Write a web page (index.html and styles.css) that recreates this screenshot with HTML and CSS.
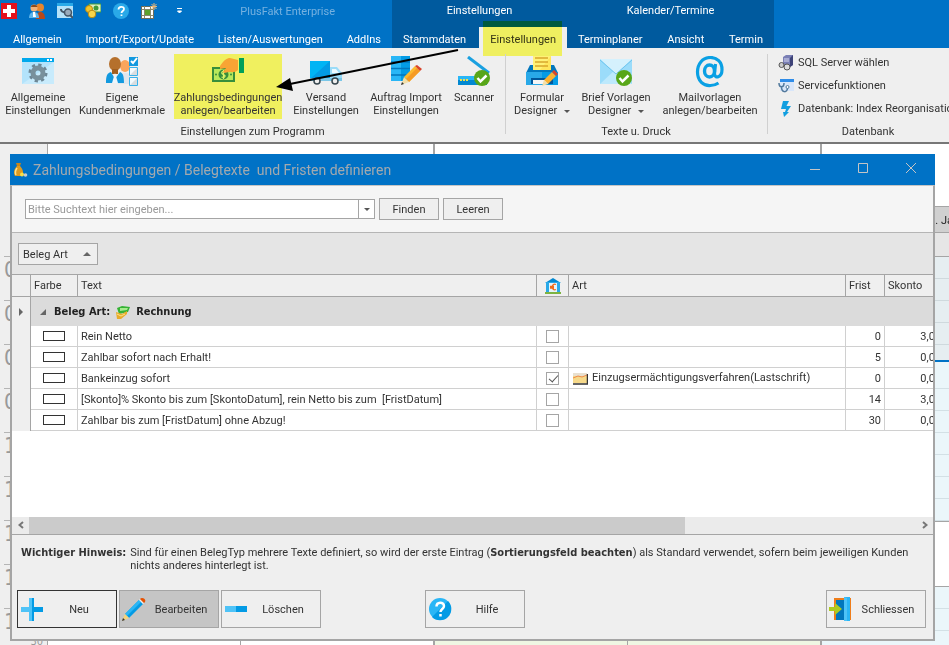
FILE: index.html
```html
<!DOCTYPE html>
<html lang="de">
<head>
  <meta charset="UTF-8">
  <meta name="viewport" content="width=device-width, initial-scale=1.0">
  <title>PlusFakt Enterprise</title>
  <link rel="stylesheet" href="styles.css">
</head>
<body>
  <header class="titlebar">
    <div class="tab-group main-group">
      <div class="quick-bar">
        <svg width="16" height="16" viewBox="0 0 16 16"><rect width="16" height="16" fill="#e3101c"/><path d="M6 2h4v4h4v4h-4v4H6v-4H2V6h4z" fill="#fff"/></svg>
        <svg width="16" height="16" viewBox="0 0 16 16"><circle cx="11" cy="4.500" r="4" fill="#e8862d"/><path d="M7 16c0-5 2-7 4.500-7s4.500 2 4.500 7z" fill="#b8481a"/><circle cx="5" cy="5" r="3.500" fill="#f0b27a"/><path d="M2 4c0-3 6-3 6.500 0z" fill="#8a4a1c"/><path d="M0 15c0-4 2-6 5-6s5 2 5 6z" fill="#5cb4ea"/><path d="M4 9h2l1 5H4z" fill="#fff"/></svg>
        <svg width="16" height="16" viewBox="0 0 16 16"><rect y="1" width="16" height="14" fill="#b5e2f9"/><rect width="16" height="3" fill="#29a9e8"/><circle cx="11" cy="9.500" r="3.500" fill="#9ab" stroke="#456" stroke-width="1.500"/><path d="M4 6a3 3 0 0 0 4 3M13 12l3 3" fill="none" stroke="#456" stroke-width="2"/></svg>
        <svg width="16" height="16" viewBox="0 0 16 16"><rect x="4" y="1" width="12" height="8" fill="#dff0c0" stroke="#3f9a3a"/><circle cx="11" cy="5" r="2.500" fill="#3f9a3a"/><circle cx="4" cy="6" r="3.500" fill="#f4c52c" stroke="#b98a10"/><circle cx="7" cy="11" r="3.800" fill="#f9d54a" stroke="#b98a10"/></svg>
        <svg width="16" height="16" viewBox="0 0 32 32"><circle cx="16" cy="16" r="16" fill="#29a9e8"/><path d="M11 13c0-7 11-7 11-1 0 4-5 4-5 8M17 23v3" fill="none" stroke="#fff" stroke-width="3.500"/></svg>
        <svg width="16" height="16" viewBox="0 0 16 16"><rect x=".5" y="3.500" width="12" height="12" fill="#fff" stroke="#6d6d5a"/><path d="M.5 6.500h12M3.500 3v12M9.500 3v12M.5 12.500h12" stroke="#8a8a6a"/><rect x="4" y="7" width="5" height="5" fill="#5da22c"/><path d="M13 0v7M9.500 3.500h6.500M10.500 1l5 5M15.500 1l-5 5" stroke="#e8b878"/></svg>
        <button class="quick-menu" aria-label="Symbolleiste anpassen"><svg width="7" height="6" viewBox="0 0 7 6"><path d="M1 .5h5M1.500 3h4L3.500 5z" fill="#fff" stroke="#fff"/></svg></button>
        <span class="app-title">PlusFakt Enterprise</span>
      </div>
      <nav class="tabs">
        <a href="#">Allgemein</a>
        <a href="#">Import/Export/Update</a>
        <a href="#">Listen/Auswertungen</a>
        <a href="#">AddIns</a>
      </nav>
    </div>
    <div class="tab-group context settings-group">
      <div class="context-title">Einstellungen</div>
      <nav class="tabs">
        <a href="#">Stammdaten</a>
        <a href="#" class="active">Einstellungen</a>
      </nav>
    </div>
    <div class="tab-group context calendar-group">
      <div class="context-title">Kalender/Termine</div>
      <nav class="tabs">
        <a href="#">Terminplaner</a>
        <a href="#">Ansicht</a>
        <a href="#">Termin</a>
      </nav>
    </div>
  </header>

  <div class="ribbon">
    <section class="ribbon-group program-group">
      <div class="ribbon-items">
        <button>
          <svg width="32" height="32" viewBox="0 0 32 32"><rect y="2" width="32" height="26" fill="#b3e3fb"/><path d="M0 28L32 6v22z" fill="#c8ebfc"/><rect y="2" width="32" height="4" fill="#00a8ec"/><path d="M25 4h2M28 4h2" stroke="#fff" stroke-width="2"/><circle cx="16" cy="17" r="8" fill="none" stroke="#6d8796" stroke-width="3" stroke-dasharray="3.200 3.080"/><circle cx="16" cy="17" r="5" fill="none" stroke="#78909c" stroke-width="5"/></svg>
          <span>Allgemeine<br>Einstellungen</span>
        </button>
        <button>
          <svg width="32" height="32" viewBox="0 0 32 32"><ellipse cx="19" cy="10" rx="5" ry="6" fill="#f9a55c"/><path d="M12 28c1-8 4-11 8-11s4 3 4 11z" fill="#dfe6ec"/><ellipse cx="9" cy="8" rx="6" ry="7" fill="#b5702c"/><path d="M6 13h6v5H6z" fill="#a05f20"/><path d="M0 27c0-7 1-10 5-11l4 7 5-7c3 1 4 4 4 11z" fill="#1299df"/><path d="M9 17l-3 10h6z" fill="#eef6fb"/><rect x="23" y="1" width="9" height="9" fill="#1299df"/><path d="M25 5l2 2 4-5" fill="none" stroke="#fff" stroke-width="2"/><path d="M23.500 11.500h8v8h-8zM23.500 21.500h8v8h-8z" fill="#f4fafd"/><path d="M24 19l7-7v7zM24 29l7-7v7z" fill="#d8dde0"/><path d="M23.500 11.500h8v8h-8zM23.500 21.500h8v8h-8z" fill="none" stroke="#39b2ea"/></svg>
          <span>Eigene<br>Kundenmerkmale</span>
        </button>
        <button class="marked">
          <svg width="32" height="32" viewBox="0 0 32 32"><rect y="11" width="23" height="15" fill="#388e3c"/><rect x="2" y="13" width="19" height="11" fill="#b9e85a"/><circle cx="11.500" cy="18.500" r="5" fill="#388e3c"/><path d="M13 16c-4-2-4 2-1.500 2.500s2 4-2 2.500M11.500 14v9" fill="none" stroke="#dff56a" stroke-width="1.200"/><circle cx="4" cy="18.500" r="1" fill="#388e3c"/><circle cx="19" cy="18.500" r="1" fill="#388e3c"/><path d="M8 10c4-6 7-8 10-8l8 2v10c-3 3-6 2-9 2l-5 1-1-1 3-4-6 1z" fill="#f8a434"/><rect x="27" y="2" width="5" height="15" fill="#00a05a"/></svg>
          <span>Zahlungsbedingungen<br>anlegen/bearbeiten</span>
        </button>
        <button>
          <svg width="32" height="32" viewBox="0 0 32 32"><rect y="5" width="20" height="18" fill="#039be5"/><path d="M0 23V5h20z" fill="#00b4f4"/><path d="M20 11h7l5 6v8H20z" fill="#9bdcf8"/><path d="M22 13h4l3 4h-7z" fill="#eefaff"/><path d="M0 22h32v3H0z" fill="#7ac7e8"/><circle cx="7" cy="25" r="3" fill="#eee" stroke="#37474f" stroke-width="1.500"/><circle cx="25" cy="25" r="3" fill="#eee" stroke="#37474f" stroke-width="1.500"/></svg>
          <span>Versand<br>Einstellungen</span>
        </button>
        <button>
          <svg width="32" height="32" viewBox="0 0 32 32"><path d="M1 0h19v25H1z" fill="#039be5"/><path d="M1 0h10v25H1z" fill="#29b6f6"/><path d="M1 6h19M1 12.500h19M1 19h19" stroke="#0277bd" stroke-width="1.500"/><path d="M14 21L25 10l5 5-11 11z" fill="#fdb92e"/><path d="M16 23L27 12l3 3-11 11z" fill="#f59a23"/><path d="M14 21l5 5-8 3z" fill="#f3dfa8"/><path d="M12 26l2 2-3 1z" fill="#333"/><path d="M25 10l2-1 5 4-2 2z" fill="#d9432a"/></svg>
          <span>Auftrag Import<br>Einstellungen</span>
        </button>
        <button>
          <svg width="32" height="32" viewBox="0 0 32 32"><path d="M10 0l21 15v7z" fill="#eef6fa"/><path d="M10 1l21 16" stroke="#1aa0e0" stroke-width="3"/><path d="M0 20h29v9H0z" fill="#0288d1"/><path d="M0 20h29l-9 4H0z" fill="#29b6f6"/><path d="M2 24h2M5 24h2M8 24h2" stroke="#f3e34a" stroke-width="2"/><circle cx="24" cy="22" r="8" fill="#58a618"/><path d="M19.500 22l3 3.500 6-6" fill="none" stroke="#fff" stroke-width="2.500"/></svg>
          <span>Scanner</span>
        </button>
      </div>
      <div class="ribbon-label">Einstellungen zum Programm</div>
    </section>

    <section class="ribbon-group print-group">
      <div class="ribbon-items">
        <button>
          <svg width="32" height="32" viewBox="0 0 32 32"><path d="M4 9h24l4 8H0z" fill="#0277bd"/><path d="M7 0h18v14H7z" fill="#fff176"/><path d="M25 0v14H14z" fill="#ffe55c"/><path d="M9 2h13M9 6h13M9 10h13" stroke="#d9a62c" stroke-width="1.500"/><path d="M0 16h32v13H0z" fill="#039be5"/><path d="M0 16h16v13H0z" fill="#29a9e8"/><path d="M5 22h22v6H5z" fill="#01579b"/><path d="M7 24h15v4H7z" fill="#f5f5f5"/><path d="M18 24l8-8 4 4-8 8z" fill="#f9b233"/><path d="M18 24l4 4-6 2z" fill="#f3dfa8"/><path d="M26 16l2-2 4 4-2 2z" fill="#d9432a"/></svg>
          <span>Formular<br>Designer <i class="caret"></i></span>
        </button>
        <button>
          <svg width="32" height="32" viewBox="0 0 32 32"><path d="M0 3h32v25H0z" fill="#9bdcfa"/><path d="M0 28L16 13l16 15z" fill="#bde9fc"/><path d="M0 3h32L16 18z" fill="#d5f1fd"/><path d="M0 4l16 14L32 4" fill="none" stroke="#6fc5ee"/><circle cx="24" cy="22" r="8" fill="#58a618"/><path d="M19.500 22l3 3.500 6-6" fill="none" stroke="#fff" stroke-width="2.500"/></svg>
          <span>Brief Vorlagen<br>Designer <i class="caret"></i></span>
        </button>
        <button>
          <svg width="32" height="32" viewBox="0 0 32 32"><g fill="none" stroke="#0aa0e4"><ellipse cx="15.500" cy="15" rx="5" ry="6" stroke-width="3.400"/><path d="M21.500 8l-1 9.500c0 5.500 7.500 4.500 7.500-4C28 6 23 1.500 16.500 1.500 8.500 1.500 3.500 8 3.500 16c0 9 6 14 13 13.500 3 0 5-.5 8-2.500" stroke-width="3.200"/></g></svg>
          <span>Mailvorlagen<br>anlegen/bearbeiten</span>
        </button>
      </div>
      <div class="ribbon-label">Texte u. Druck</div>
    </section>

    <section class="ribbon-group database-group">
      <div class="ribbon-list">
        <button>
          <svg width="16" height="16" viewBox="0 0 16 16"><path d="M5 2l3-2h7v10l-3 2H5z" fill="#7a7fb5"/><path d="M12 3l3-3v10l-3 2z" fill="#3d4277"/><path d="M6 4h5M6 6h5" stroke="#d5d8f0"/><circle cx="3.500" cy="10" r="2.500" fill="#ccc" stroke="#555"/><circle cx="9" cy="12" r="3" fill="#ddd" stroke="#555"/></svg>
          SQL Server wählen
        </button>
        <button>
          <svg width="16" height="16" viewBox="0 0 16 16"><rect x="2" y="2" width="14" height="11" fill="#d8e6fa"/><rect x="2" y="1" width="14" height="3" fill="#2f8ce8"/><path d="M1 5c0 5 5 5 5 0M3.500 9c0 6 6 6 6 1" fill="none" stroke="#52799c" stroke-width="1.500"/><circle cx="9.500" cy="9" r="1.500" fill="#fff" stroke="#52799c"/></svg>
          Servicefunktionen
        </button>
        <button>
          <svg width="16" height="16" viewBox="0 0 16 16"><path d="M5 0h6L8.500 5H13L9 11h2l-5 5-1-5h2l1-3H3z" fill="#129fe0"/></svg>
          Datenbank: Index Reorganisation
        </button>
      </div>
      <div class="ribbon-label">Datenbank</div>
    </section>
  </div>

  <main class="workspace">
    <div class="ruler">
      <div class="hour">06</div>
      <div class="hour">07</div>
      <div class="hour">08</div>
      <div class="hour">09</div>
      <div class="hour">10</div>
      <div class="hour">11</div>
      <div class="hour">12</div>
      <div class="hour">13</div>
      <div class="hour">14<small>30</small></div>
    </div>
    <div class="day"><div class="person"></div><div class="person"></div></div>
    <div class="day green"><div class="person"></div><div class="person"></div></div>
    <div class="day last">
      <div class="day-name">05. Januar</div>
      <div class="all-day"></div>
      <div class="slots early"></div>
      <div class="slots work"></div>
      <div class="slots pause"></div>
      <div class="slots"></div>
    </div>

    <section class="dialog">
      <div class="dialog-title">
        <svg width="16" height="16" viewBox="0 0 16 16"><path d="M3 1h5L7 4H4z" fill="#c8861a"/><path d="M4 4h3c3 3 4 7 2 10H2C0 11 1 7 4 4z" fill="#dd9a20"/><path d="M4 6c-2 3-2 5-1 7" stroke="#ffe08a" fill="none" stroke-width="1.500"/><circle cx="9" cy="12.500" r="2" fill="#f7e04a"/><circle cx="12.500" cy="13" r="1.800" fill="#ccc"/></svg>
        <h1>Zahlungsbedingungen / Belegtexte&nbsp; und Fristen definieren</h1>
        <button aria-label="Minimieren"><svg width="10" height="10" viewBox="0 0 10 10"><path d="M0 6.500h10"/></svg></button>
        <button aria-label="Maximieren"><svg width="10" height="10" viewBox="0 0 10 10"><path d="M.5.5h9v9h-9z"/></svg></button>
        <button aria-label="Schließen"><svg width="10" height="10" viewBox="0 0 10 10"><path d="M0 0l10 10M10 0L0 10"/></svg></button>
      </div>

      <div class="dialog-body">
        <form class="search">
          <div class="search-box">
            <input type="text" placeholder="Bitte Suchtext hier eingeben..." aria-label="Suchtext">
            <button type="button" aria-label="Verlauf"><i class="caret"></i></button>
          </div>
          <button type="button" class="btn">Finden</button>
          <button type="button" class="btn">Leeren</button>
        </form>

        <div class="group-panel">
          <button class="group-by">Beleg Art <i class="sort-up"></i></button>
        </div>

        <div class="grid">
          <table>
            <colgroup>
              <col class="c-mark"><col class="c-color"><col class="c-text"><col class="c-check"><col><col class="c-term"><col class="c-discount">
            </colgroup>
            <thead>
              <tr>
                <th></th>
                <th>Farbe</th>
                <th>Text</th>
                <th class="center"><svg width="16" height="16" viewBox="0 0 16 16"><path d="M0 5l8-5 8 5z" fill="#0288d1"/><path d="M1 4h14v10H1z" fill="#29a9e8"/><path d="M4 5h8v9H4z" fill="#e4f3fb"/><path d="M0 15h16" stroke="#7cb342" stroke-width="2"/><path d="M11 6.500c-5-2-5 7 0 5M5 8.500h4M5 10h4" fill="none" stroke="#ef6c1a" stroke-width="1.300"/></svg></th>
                <th>Art</th>
                <th>Frist</th>
                <th>Skonto</th>
              </tr>
            </thead>
            <tbody>
              <tr class="group-row">
                <td><i class="row-arrow"></i></td>
                <td colspan="6">
                  <div class="group-head">
                    <i class="expander"></i>
                    <span>Beleg Art:</span>
                    <svg width="14" height="14" viewBox="0 0 14 14"><path d="M1 3l5-2 8 1-2 5-9 2z" fill="#35b335"/><path d="M4 3l8 0-1 2-7 1z" fill="#a6eb8e"/><path d="M0 7l6 2 5-3v3l-6 5H1z" fill="#e9ac2a"/><path d="M1 9l4 2 4-2" fill="none" stroke="#fbe38a"/></svg>
                    <span>Rechnung</span>
                  </div>
                </td>
              </tr>
              <tr>
                <td></td>
                <td><span class="swatch"></span></td>
                <td>Rein Netto</td>
                <td class="center"><input type="checkbox" aria-label="Bankeinzug"></td>
                <td></td>
                <td class="num">0</td>
                <td class="num">3,00</td>
              </tr>
              <tr>
                <td></td>
                <td><span class="swatch"></span></td>
                <td>Zahlbar sofort nach Erhalt!</td>
                <td class="center"><input type="checkbox" aria-label="Bankeinzug"></td>
                <td></td>
                <td class="num">5</td>
                <td class="num">0,00</td>
              </tr>
              <tr>
                <td></td>
                <td><span class="swatch"></span></td>
                <td>Bankeinzug sofort</td>
                <td class="center"><input type="checkbox" aria-label="Bankeinzug" checked></td>
                <td class="kind"><svg width="16" height="13" viewBox="0 0 16 13"><path d="M1 1h7l1 1h6v9H1z" fill="#f6d98a"/><path d="M1 1h14v3H1z" fill="#e8e0d0"/><path d="M1 6l5-2 4 1 5-2" fill="none" stroke="#ee8a4a"/><path d="M1 12h14.500V2" fill="none" stroke="#333" stroke-width="1.500"/></svg>Einzugsermächtigungsverfahren(Lastschrift)</td>
                <td class="num">0</td>
                <td class="num">0,00</td>
              </tr>
              <tr>
                <td></td>
                <td><span class="swatch"></span></td>
                <td>[Skonto]% Skonto bis zum [SkontoDatum], rein Netto bis zum&nbsp; [FristDatum]</td>
                <td class="center"><input type="checkbox" aria-label="Bankeinzug"></td>
                <td></td>
                <td class="num">14</td>
                <td class="num">3,00</td>
              </tr>
              <tr>
                <td></td>
                <td><span class="swatch"></span></td>
                <td>Zahlbar bis zum [FristDatum] ohne Abzug!</td>
                <td class="center"><input type="checkbox" aria-label="Bankeinzug"></td>
                <td></td>
                <td class="num">30</td>
                <td class="num">0,00</td>
              </tr>
            </tbody>
          </table>
        </div>

        <div class="scrollbar">
          <button aria-label="Nach links"><svg width="6" height="8" viewBox="0 0 6 8"><path d="M5 1L1.500 4 5 7"/></svg></button>
          <div class="track"><div class="thumb"></div></div>
          <button aria-label="Nach rechts"><svg width="6" height="8" viewBox="0 0 6 8"><path d="M1 1l3.500 3L1 7"/></svg></button>
        </div>

        <div class="hint">
          <strong>Wichtiger Hinweis:</strong>
          <p>Sind für einen BelegTyp mehrere Texte definiert, so wird der erste Eintrag (<strong>Sortierungsfeld beachten</strong>) als Standard verwendet, sofern beim jeweiligen Kunden nichts anderes hinterlegt ist.</p>
        </div>

        <div class="actions">
          <button class="focused"><svg width="24" height="24" viewBox="0 0 24 24"><path d="M9 1h5v9h9v5h-9v9H9v-9H1v-5h8z" fill="#4fc3f7"/><path d="M12 1h2v9h9v5h-9v9h-2z" fill="#039be5"/></svg><span>Neu</span></button>
          <button class="pressed"><svg width="24" height="24" viewBox="0 0 24 24"><path d="M3 17L17 3l4 4L7 21z" fill="#039be5"/><path d="M3 17L17 3l2 2L5 19z" fill="#29b6f6"/><path d="M3 17l4 4-7 3z" fill="#f5d47a"/><path d="M1 21l2 2-3 1z" fill="#333"/><path d="M17 3l1-1 4 4-1 1z" fill="#eee"/><path d="M18 2c2-3 8 1 4 4z" fill="#e65100"/></svg><span>Bearbeiten</span></button>
          <button><svg width="24" height="24" viewBox="0 0 24 24"><path d="M1 9h22v6H1z" fill="#4fc3f7"/><path d="M12 9h11v6H12z" fill="#039be5"/></svg><span>Löschen</span></button>
          <button class="help"><svg width="24" height="24" viewBox="0 0 24 24"><circle cx="12" cy="12" r="11" fill="#29b6f6"/><path d="M20 4A11 11 0 0 1 4 20z" fill="#039be5"/><path d="M8.500 9.500c0-5 7.500-5 7.500-.5 0 3-3.500 3-3.500 6M12.500 17v2.500" fill="none" stroke="#fff" stroke-width="2.500"/></svg><span>Hilfe</span></button>
          <button class="close"><svg width="24" height="24" viewBox="0 0 24 24"><path d="M5 1h17v22H5z" fill="#ef7d1a"/><path d="M7 3h13v20H7z" fill="#0277bd"/><path d="M15 0h6v24h-6z" fill="#29b6f6"/><path d="M15 0l3 1v23l-3 0z" fill="#4fc3f7"/><path d="M0 10h6V6l7 6-7 6v-4H0z" fill="#afcb1f"/></svg><span>Schliessen</span></button>
        </div>
      </div>
    </section>
  </main>

  <svg class="pointer" width="190" height="50" viewBox="0 0 190 50"><path d="M188 2L15 37" stroke="#000" stroke-width="2"/><path d="M6 39l14-9 3 13z" fill="#000"/></svg>
</body>
</html>
```
FILE: styles.css
```css
* {
  box-sizing: border-box;
}

body {
  display: flex;
  flex-direction: column;
  position: relative;
  min-height: 100vh;
  margin: 0;
  overflow: hidden;
  background-color: #fff;
  color: #333;
  font-family: Roboto, "Liberation Sans", sans-serif;
  font-size: 11px;
  line-height: 13px;
}

button,
input {
  margin: 0;
  padding: 0;
  border: none;
  border-radius: 0;
  background: none;
  color: inherit;
  font: inherit;
}

svg {
  flex: none;
}

strong {
  font-family: "DejaVu Sans Condensed", sans-serif;
}

/* title bar and tabs */
.titlebar {
  display: flex;
  height: 48px;
  background-color: #0072c6;
  color: #fff;
}

.tab-group {
  display: flex;
  flex-direction: column;
  justify-content: space-between;
}

.main-group {
  width: 392px;
}

.settings-group {
  width: 175px;
}

.calendar-group {
  width: 207px;
}

.context {
  background-color: #005a9e;
}

.context-title {
  padding-top: 4px;
  text-align: center;
}

.quick-bar {
  display: flex;
  align-items: center;
  gap: 12px;
  padding: 3px 57px 0 1px;
}

.quick-menu {
  display: flex;
  padding: 0 7px;
}

.app-title {
  margin-left: auto;
  color: #75b1e0;
}

.tabs {
  display: flex;
  justify-content: space-between;
}

.main-group .tabs {
  padding-left: 2px;
}

.tabs a {
  padding: 6px 11px 2px;
  color: #fff;
  text-decoration: none;
  white-space: nowrap;
}

.tabs .active {
  position: relative;
  background-color: #efefef;
  color: #333;
}

.tabs .active::after {
  content: "";
  position: absolute;
  inset: -6px 5px -8px 4px;
  background-color: #ffff66;
  mix-blend-mode: multiply;
}

/* ribbon */
.ribbon {
  display: flex;
  height: 96px;
  background-color: #efefef;
  border-bottom: 2px solid #777;
  overflow: hidden;
}

.ribbon-group {
  display: flex;
  flex-direction: column;
  flex: none;
  position: relative;
  padding-top: 6px;
}

.ribbon-group + .ribbon-group::before {
  content: "";
  position: absolute;
  top: 6px;
  bottom: 8px;
  left: 0;
  border-left: 1px solid #d0d0d0;
}

.program-group {
  width: 505px;
}

.print-group {
  width: 262px;
}

.database-group {
  width: 202px;
  padding-top: 3px;
}

.ribbon-items {
  display: grid;
}

.program-group .ribbon-items {
  grid-template-columns: 76px 92px 120px 76px 84px 52px;
}

.print-group .ribbon-items {
  grid-template-columns: 74px 74px 114px;
}

.ribbon-items button {
  display: flex;
  flex-direction: column;
  align-items: center;
  justify-self: center;
  gap: 3px;
  height: 65px;
  padding-top: 2px;
  white-space: nowrap;
}

.ribbon-items .marked {
  background-color: #f0f05f;
}

.ribbon-label {
  margin-top: auto;
  padding-bottom: 4px;
  text-align: center;
}

.ribbon-list {
  display: flex;
  flex-direction: column;
  padding-left: 11px;
  white-space: nowrap;
}

.ribbon-list button {
  display: flex;
  align-items: center;
  gap: 4px;
  height: 23px;
}

.caret {
  display: inline-block;
  margin-left: 4px;
  border: 3px solid transparent;
  border-top-color: #555;
  border-bottom: none;
  vertical-align: middle;
}

/* calendar behind the dialog */
.workspace {
  display: flex;
  flex: 1;
  position: relative;
  min-height: 501px;
}

.ruler {
  width: 48px;
  padding-top: 112px;
  border-right: 1px solid #a5a5a5;
  background-color: #efefef;
  color: #999;
}

.hour {
  height: 44px;
  margin-left: 4px;
  border-top: 1px solid #b5b5b5;
  font-family: "DejaVu Sans Condensed", sans-serif;
  font-size: 22px;
  line-height: 26px;
}

.hour small {
  float: right;
  padding: 20px 4px 0 0;
  font-size: 11px;
}

.day {
  display: flex;
  flex: 0 0 387px;
  padding-top: 490px;
  border-right: 2px solid #a5a5a5;
}

.person {
  flex: 1;
}

.person + .person {
  border-left: 1px solid #a5a5a5;
}

.green {
  background-color: #eff7e3;
  background-clip: content-box;
}

.last {
  flex: 1;
  flex-direction: column;
  padding-top: 62px;
  border: none;
  overflow: hidden;
}

.day-name {
  height: 27px;
  padding: 7px 0 0 101px;
  border: solid #a5a5a5;
  border-width: 1px 0;
  background-color: #d0d0d0;
  color: #222;
  white-space: nowrap;
}

.all-day {
  height: 24px;
  border-bottom: 1px solid #a5a5a5;
  background-color: #e6e6e6;
}

.slots {
  flex: 1;
  background: repeating-linear-gradient(#ebf6fa 0 21px, #d3e0e5 21px 22px);
}

.slots.early {
  flex: none;
  height: 105px;
  border-bottom: 2px solid #0072c6;
  background: repeating-linear-gradient(#e6eef1 0 21px, #cfd9dd 21px 22px);
}

.slots.work {
  flex: none;
  height: 160px;
  border-bottom: 1px solid #a5a5a5;
  background-position: 0 5px;
}

.slots.pause {
  flex: none;
  height: 65px;
  border-bottom: 1px solid #a5a5a5;
  background: #fff;
}

/* dialog */
.dialog {
  position: absolute;
  top: 10px;
  right: 14px;
  left: 10px;
}

.dialog-title {
  display: flex;
  align-items: center;
  height: 31px;
  padding-left: 3px;
  background-color: #0072c6;
}

.dialog-title h1 {
  flex: 1;
  margin: 0;
  padding-left: 4px;
  color: #a3a9ae;
  font-size: 14px;
  font-weight: normal;
  line-height: 18px;
}

.dialog-title button {
  width: 48px;
  height: 31px;
}

.dialog-title button svg {
  fill: none;
  stroke: #c5c5c5;
}

.dialog-body {
  border: 2px solid #a5a5a5;
  border-top: 1px solid #c5c5c5;
  background-color: #efefef;
}

.search {
  display: flex;
  gap: 4px;
  padding: 12px 13px;
  border-bottom: 1px solid #b5b5b5;
  background-color: #f5f5f5;
}

.search-box {
  display: flex;
  width: 350px;
  height: 20px;
  margin-top: 1px;
  border: 1px solid #a5a5a5;
  background-color: #fff;
}

.search-box input {
  flex: 1;
  padding: 0 2px;
}

.search-box input::placeholder {
  color: #999;
}

.search-box button {
  width: 16px;
  border-left: 1px solid #a5a5a5;
}

.search-box .caret {
  display: block;
  width: 6px;
  margin: 0 auto;
}

.btn {
  width: 60px;
  height: 22px;
  border: 1px solid #a5a5a5;
  background-color: #efefef;
}

.group-panel {
  padding: 10px 6px 9px;
  background-color: #e5e5e5;
}

.group-by {
  display: flex;
  align-items: center;
  justify-content: space-between;
  width: 80px;
  height: 22px;
  padding: 0 6px 0 4px;
  border: 1px solid #a5a5a5;
  background-color: #efefef;
}

.sort-up {
  border: 4px solid transparent;
  border-top: none;
  border-bottom: 4px solid #666;
}

.grid {
  height: 243px;
  background-color: #fff;
  overflow: hidden;
}

.grid table {
  width: calc(100% + 12px);
  border-collapse: separate;
  border-spacing: 0;
  table-layout: fixed;
}

.c-mark {
  width: 19px;
}

.c-color {
  width: 47px;
}

.c-text {
  width: 459px;
}

.c-check {
  width: 32px;
}

.c-term {
  width: 39px;
}

.c-discount {
  width: 60px;
}

th,
td {
  height: 21px;
  padding: 0 3px;
  border-right: 1px solid #d0d0d0;
  border-bottom: 1px solid #d0d0d0;
  text-align: left;
  white-space: nowrap;
}

th {
  height: 23px;
  border: solid #a5a5a5;
  border-width: 1px 1px 1px 0;
  background-color: #efefef;
  font-weight: normal;
}

td:first-child {
  border-right-color: #a5a5a5;
  border-bottom: none;
  background-color: #efefef;
}

td svg,
th svg {
  vertical-align: middle;
}

.center {
  padding: 0;
  text-align: center;
}

.num {
  text-align: right;
}

.group-row td {
  height: 29px;
}

.group-row td + td {
  border: none;
  background-color: #dbdbdb;
}

.group-head {
  display: flex;
  align-items: center;
  gap: 6px;
  padding-left: 6px;
  color: #222;
  font-family: "DejaVu Sans Condensed", sans-serif;
  font-weight: bold;
}

.expander {
  margin-right: 2px;
  border-bottom: 6px solid #666;
  border-left: 6px solid transparent;
}

.row-arrow {
  display: block;
  width: 4px;
  margin: 0 auto;
  border: 4px solid transparent;
  border-right: none;
  border-left-color: #666;
}

.swatch {
  display: block;
  width: 22px;
  height: 10px;
  margin: 0 auto;
  border: 1px solid #333;
}

input[type="checkbox"] {
  display: block;
  position: relative;
  width: 13px;
  height: 13px;
  margin: 0 auto;
  border: 1px solid #a5a5a5;
  appearance: none;
}

input[type="checkbox"]:checked::after {
  content: "";
  position: absolute;
  top: 0;
  left: 4px;
  width: 4px;
  height: 8px;
  border: solid #555;
  border-width: 0 1px 1px 0;
  transform: rotate(42deg);
}

.kind svg {
  margin-right: 4px;
}

.scrollbar {
  display: flex;
  height: 18px;
  border-bottom: 1px solid #a5a5a5;
  background-color: #ebebeb;
}

.scrollbar button {
  width: 17px;
}

.scrollbar svg {
  fill: none;
  stroke: #777;
  stroke-width: 2;
}

.track {
  flex: 1;
}

.thumb {
  width: 74%;
  height: 17px;
  background-color: #cbcbcb;
}

.hint {
  display: flex;
  gap: 4px;
  padding: 11px 9px 0;
}

.hint p {
  flex: 1;
  margin: 0;
}

.actions {
  display: flex;
  gap: 2px;
  padding: 18px 7px 11px 5px;
}

.actions button {
  display: flex;
  align-items: center;
  width: 100px;
  height: 38px;
  padding: 0 2px;
  border: 1px solid #a5a5a5;
}

.actions span {
  flex: 1;
  text-align: center;
}

.actions .focused {
  border-color: #333;
}

.actions .pressed {
  background-color: #c5c5c5;
}

.actions .help {
  margin-left: 102px;
}

.actions .close {
  margin-left: auto;
}

/* arrow from the tab to the marked button */
.pointer {
  position: absolute;
  top: 48px;
  left: 270px;
  pointer-events: none;
}
```
